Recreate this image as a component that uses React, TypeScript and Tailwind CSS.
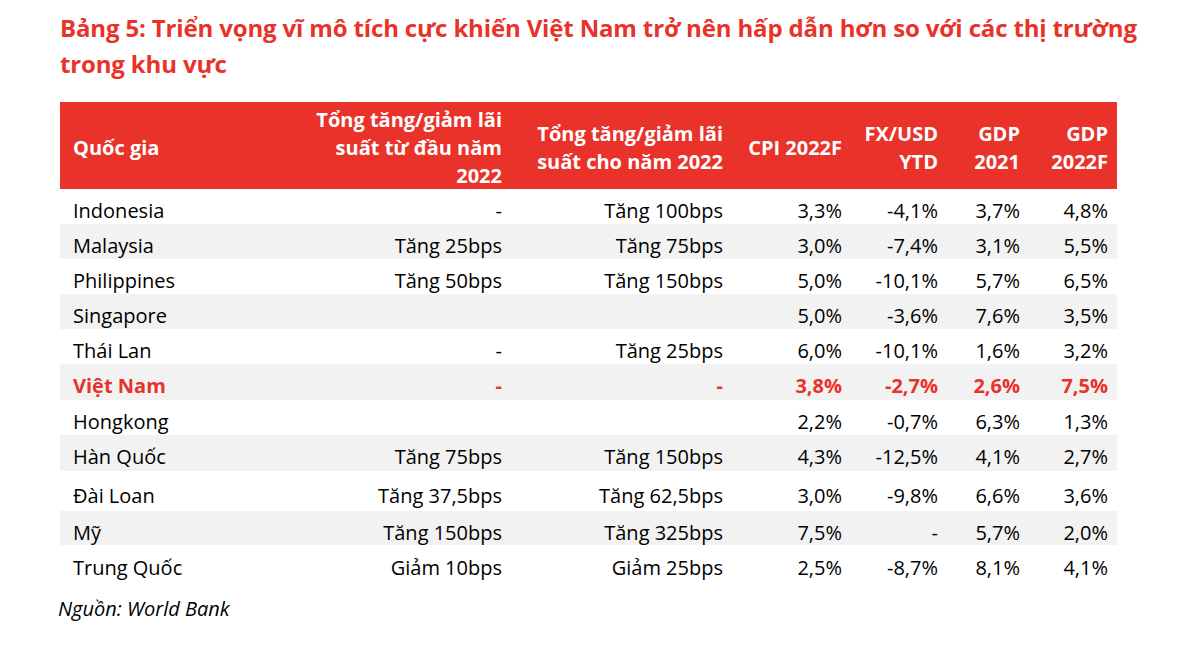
import React from 'react';

type Row = {
  country: string;
  ytd: string;
  year: string;
  cpi: string;
  fx: string;
  gdp21: string;
  gdp22: string;
  h: string;
  pt: string;
  striped?: boolean;
  highlight?: boolean;
};

const rows: Row[] = [
  { country: 'Indonesia', ytd: '-', year: 'Tăng 100bps', cpi: '3,3%', fx: '-4,1%', gdp21: '3,7%', gdp22: '4,8%', h: 'h-[35px]', pt: 'pt-[10px]' },
  { country: 'Malaysia', ytd: 'Tăng 25bps', year: 'Tăng 75bps', cpi: '3,0%', fx: '-7,4%', gdp21: '3,1%', gdp22: '5,5%', h: 'h-[35px]', pt: 'pt-[10px]', striped: true },
  { country: 'Philippines', ytd: 'Tăng 50bps', year: 'Tăng 150bps', cpi: '5,0%', fx: '-10,1%', gdp21: '5,7%', gdp22: '6,5%', h: 'h-[35px]', pt: 'pt-[10px]' },
  { country: 'Singapore', ytd: '', year: '', cpi: '5,0%', fx: '-3,6%', gdp21: '7,6%', gdp22: '3,5%', h: 'h-[35px]', pt: 'pt-[10px]', striped: true },
  { country: 'Thái Lan', ytd: '-', year: 'Tăng 25bps', cpi: '6,0%', fx: '-10,1%', gdp21: '1,6%', gdp22: '3,2%', h: 'h-[35px]', pt: 'pt-[10px]' },
  { country: 'Việt Nam', ytd: '-', year: '-', cpi: '3,8%', fx: '-2,7%', gdp21: '2,6%', gdp22: '7,5%', h: 'h-[36px]', pt: 'pt-[10px]', striped: true, highlight: true },
  { country: 'Hongkong', ytd: '', year: '', cpi: '2,2%', fx: '-0,7%', gdp21: '6,3%', gdp22: '1,3%', h: 'h-[35px]', pt: 'pt-[10px]' },
  { country: 'Hàn Quốc', ytd: 'Tăng 75bps', year: 'Tăng 150bps', cpi: '4,3%', fx: '-12,5%', gdp21: '4,1%', gdp22: '2,7%', h: 'h-[36px]', pt: 'pt-[10px]', striped: true },
  { country: 'Đài Loan', ytd: 'Tăng 37,5bps', year: 'Tăng 62,5bps', cpi: '3,0%', fx: '-9,8%', gdp21: '6,6%', gdp22: '3,6%', h: 'h-[40px]', pt: 'pt-[13px]' },
  { country: 'Mỹ', ytd: 'Tăng 150bps', year: 'Tăng 325bps', cpi: '7,5%', fx: '-', gdp21: '5,7%', gdp22: '2,0%', h: 'h-[34px]', pt: 'pt-[10px]', striped: true },
  { country: 'Trung Quốc', ytd: 'Giảm 10bps', year: 'Giảm 25bps', cpi: '2,5%', fx: '-8,7%', gdp21: '8,1%', gdp22: '4,1%', h: 'h-[36px]', pt: 'pt-[11px]' },
];

const cols = 'grid grid-cols-[251px_200px_221px_119px_96px_82px_88px]';

const App: React.FC = () => {
  return (
    <div className="w-[1194px] h-[672px] bg-white pl-[60px] font-['Open_Sans',sans-serif] text-black">
      {/* Title */}
      <h1 className="pt-[10px] text-[24px] leading-[36px] font-bold text-[#e8322a] tracking-[-0.15px]">
        Bảng 5: Triển vọng vĩ mô tích cực khiến Việt Nam trở nên hấp dẫn hơn so với các thị trường
        <br />
        trong khu vực
      </h1>

      {/* Table */}
      <div className="mt-[20px] w-[1057px]">
        <div className={`${cols} h-[87px] pt-[4px] bg-[#e8322a] text-white font-bold text-[20px] leading-[28px] items-center`}>
          <div className="pl-[13px]">Quốc gia</div>
          <div className="text-right pr-[9px]">
            Tổng tăng/giảm lãi
            <br />
            suất từ đầu năm
            <br />
            2022
          </div>
          <div className="text-right pr-[9px]">
            Tổng tăng/giảm lãi
            <br />
            suất cho năm 2022
          </div>
          <div className="text-right pr-[9px]">CPI 2022F</div>
          <div className="text-right pr-[9px]">
            FX/USD
            <br />
            YTD
          </div>
          <div className="text-right pr-[9px]">
            GDP
            <br />
            2021
          </div>
          <div className="text-right pr-[9px]">
            GDP
            <br />
            2022F
          </div>
        </div>

        {rows.map((r) => (
          <div
            key={r.country}
            className={`${cols} ${r.h} ${r.pt} text-[20px] leading-[24px] ${r.striped ? 'bg-[#f2f2f2]' : 'bg-white'} ${
              r.highlight ? 'font-bold text-[#e8322a]' : ''
            }`}
          >
            <div className="pl-[13px]">{r.country}</div>
            <div className="text-right pr-[9px]">{r.ytd}</div>
            <div className="text-right pr-[9px]">{r.year}</div>
            <div className="text-right pr-[9px]">{r.cpi}</div>
            <div className="text-right pr-[9px]">{r.fx}</div>
            <div className="text-right pr-[9px]">{r.gdp21}</div>
            <div className="text-right pr-[9px]">{r.gdp22}</div>
          </div>
        ))}
      </div>

      <p className="mt-[16px] text-[20px] leading-[24px] italic -ml-[2px]">Nguồn: World Bank</p>
    </div>
  );
};

export default App;
